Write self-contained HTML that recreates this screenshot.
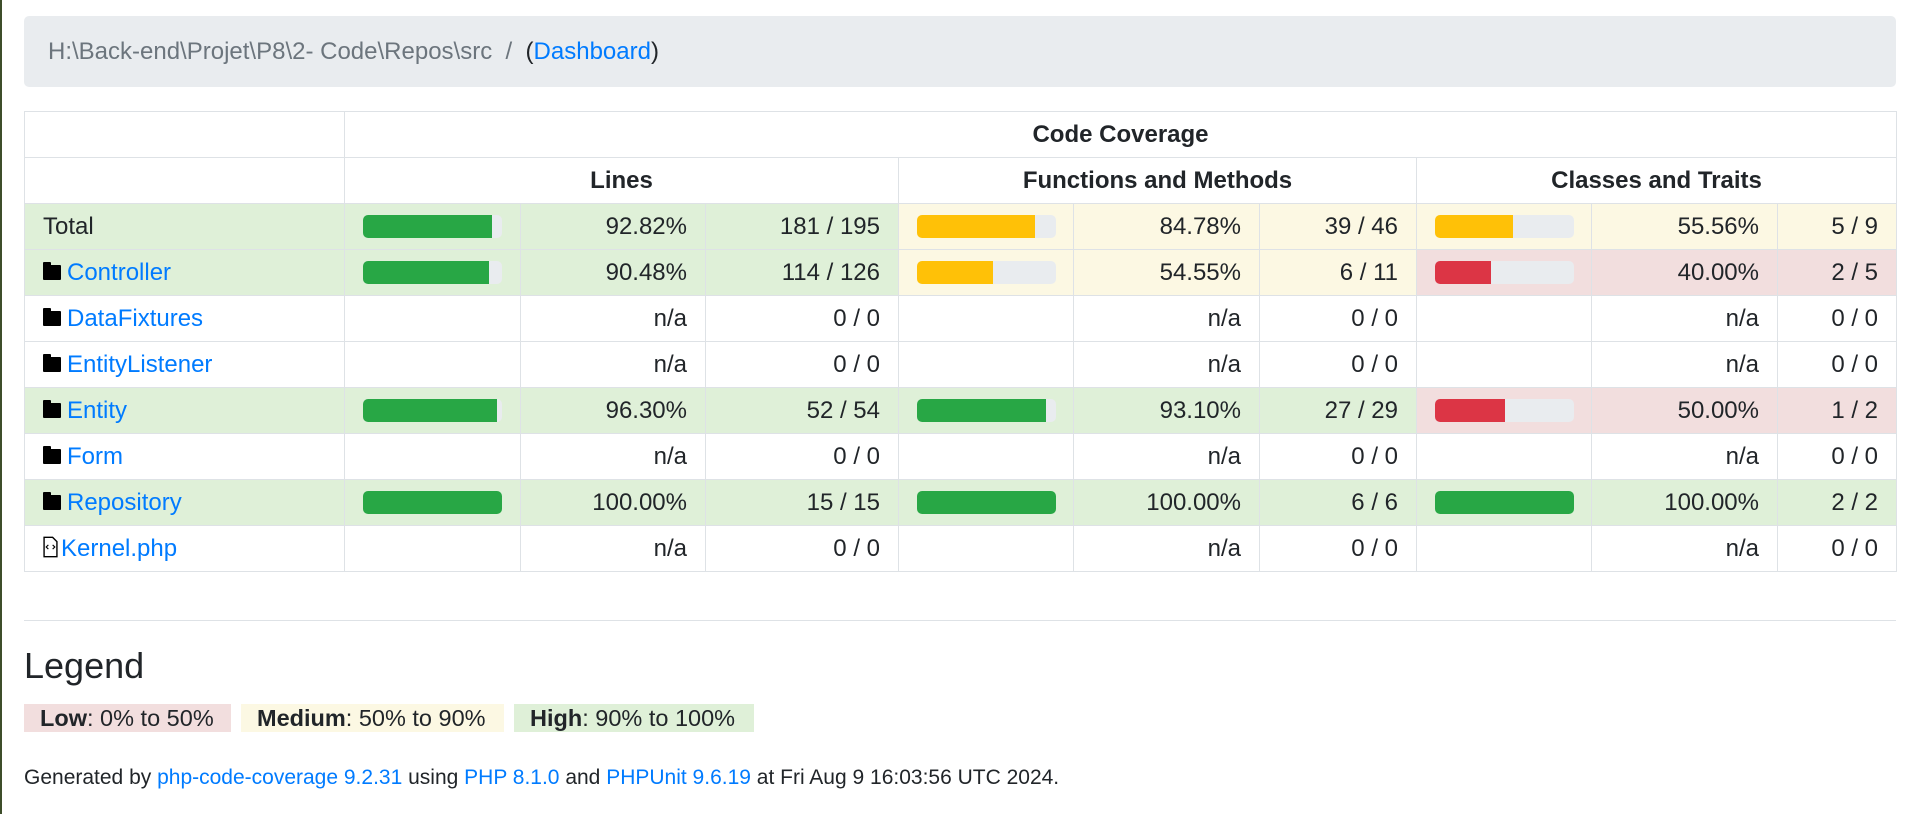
<!DOCTYPE html>
<html><head><meta charset="utf-8"><style>
*{box-sizing:border-box}
body{margin:0;width:1906px;height:814px;overflow:hidden;background:#fff;font-family:"Liberation Sans",Arial,sans-serif;font-size:24px;color:#212529;border-left:2px solid #3d4d2a}
a{color:#007bff;text-decoration:none}
.bc{position:absolute;left:24px;top:16px;width:1872px;height:71px;background:#e9ecef;border-radius:5px;padding:0 24px;line-height:71px;color:#6c757d;font-size:24px}
.bc .d{color:#212529}
table{position:absolute;left:24px;top:111px;border-collapse:collapse;table-layout:fixed;width:1872px}
td,th{border:1px solid #dee2e6;height:46px;padding:0 18px;text-align:right;white-space:nowrap}
th{text-align:center;font-weight:bold}
td.n{text-align:left;padding-left:18px}
.s td{background:#dff0d8}
td.w{background:#fcf8e3!important}
td.r{background:#f2dede!important}
td.b{padding:0 18px}
.p{height:23px;background:#e9ecef;border-radius:5px;overflow:hidden;width:139px}
.p i{display:block;height:100%}
.g{background:#28a745}.y{background:#ffc107}.x{background:#dc3545}
.f{display:inline-block;width:18px;height:15px;background:#000;position:relative;vertical-align:0px;margin-right:6px;border-radius:1px}
.f:before{content:"";position:absolute;left:0;top:-3px;width:8px;height:4px;background:#000;border-radius:1px 1px 0 0}
.hr{position:absolute;left:24px;top:620px;width:1872px;border-top:1px solid #dee2e6}
h2{position:absolute;left:24px;top:644px;margin:0;font-weight:400;font-size:36px;line-height:44px}
.lg{position:absolute;top:704px;height:28px;line-height:28px;padding:0 16px;font-size:23.5px}
.ft{position:absolute;left:24px;top:766px;font-size:21px}
</style></head><body>
<div class="bc">H:\Back-end\Projet\P8\2- Code\Repos\src &nbsp;/&nbsp; <span class="d">(<a>Dashboard</a>)</span></div>
<table>
<colgroup><col style="width:320px"><col style="width:176px"><col style="width:185px"><col style="width:193px"><col style="width:175px"><col style="width:186px"><col style="width:157px"><col style="width:175px"><col style="width:186px"><col style="width:119px"></colgroup>
<tr><th></th><th colspan="9">Code Coverage</th></tr>
<tr><th></th><th colspan="3">Lines</th><th colspan="3">Functions and Methods</th><th colspan="3">Classes and Traits</th></tr>
<tr class="s"><td class="n">Total</td><td class="b"><div class="p"><i class="g" style="width:93%"></i></div></td><td>92.82%</td><td>181 / 195</td><td class="b w"><div class="p"><i class="y" style="width:85%"></i></div></td><td class="w">84.78%</td><td class="w">39 / 46</td><td class="b w"><div class="p"><i class="y" style="width:56%"></i></div></td><td class="w">55.56%</td><td class="w">5 / 9</td></tr>
<tr class="s"><td class="n"><span class="f"></span><a>Controller</a></td><td class="b"><div class="p"><i class="g" style="width:90.5%"></i></div></td><td>90.48%</td><td>114 / 126</td><td class="b w"><div class="p"><i class="y" style="width:55%"></i></div></td><td class="w">54.55%</td><td class="w">6 / 11</td><td class="b r"><div class="p"><i class="x" style="width:40%"></i></div></td><td class="r">40.00%</td><td class="r">2 / 5</td></tr>
<tr><td class="n"><span class="f"></span><a>DataFixtures</a></td><td></td><td>n/a</td><td>0 / 0</td><td></td><td>n/a</td><td>0 / 0</td><td></td><td>n/a</td><td>0 / 0</td></tr>
<tr><td class="n"><span class="f"></span><a>EntityListener</a></td><td></td><td>n/a</td><td>0 / 0</td><td></td><td>n/a</td><td>0 / 0</td><td></td><td>n/a</td><td>0 / 0</td></tr>
<tr class="s"><td class="n"><span class="f"></span><a>Entity</a></td><td class="b"><div class="p"><i class="g" style="width:96.3%"></i></div></td><td>96.30%</td><td>52 / 54</td><td class="b"><div class="p"><i class="g" style="width:93%"></i></div></td><td>93.10%</td><td>27 / 29</td><td class="b r"><div class="p"><i class="x" style="width:50%"></i></div></td><td class="r">50.00%</td><td class="r">1 / 2</td></tr>
<tr><td class="n"><span class="f"></span><a>Form</a></td><td></td><td>n/a</td><td>0 / 0</td><td></td><td>n/a</td><td>0 / 0</td><td></td><td>n/a</td><td>0 / 0</td></tr>
<tr class="s"><td class="n"><span class="f"></span><a>Repository</a></td><td class="b"><div class="p"><i class="g" style="width:100%"></i></div></td><td>100.00%</td><td>15 / 15</td><td class="b"><div class="p"><i class="g" style="width:100%"></i></div></td><td>100.00%</td><td>6 / 6</td><td class="b"><div class="p"><i class="g" style="width:100%"></i></div></td><td>100.00%</td><td>2 / 2</td></tr>
<tr><td class="n"><svg width="15" height="22" viewBox="0 0 14 20" style="vertical-align:-2px;margin-right:3px"><path d="M1 1h8l4 4v14H1z" fill="#fff" stroke="#000" stroke-width="1.3"/><path d="M5 8l-2 2 2 2M9 8l2 2-2 2" fill="none" stroke="#000" stroke-width="1.1"/></svg><a>Kernel.php</a></td><td></td><td>n/a</td><td>0 / 0</td><td></td><td>n/a</td><td>0 / 0</td><td></td><td>n/a</td><td>0 / 0</td></tr>
</table>
<div class="hr"></div>
<h2>Legend</h2>
<div class="lg" style="left:24px;width:207px;background:#f2dede"><b>Low</b>: 0% to 50%</div>
<div class="lg" style="left:241px;width:263px;background:#fcf8e3"><b>Medium</b>: 50% to 90%</div>
<div class="lg" style="left:514px;width:240px;background:#dff0d8"><b>High</b>: 90% to 100%</div>
<div class="ft">Generated by <a>php-code-coverage 9.2.31</a> using <a>PHP 8.1.0</a> and <a>PHPUnit 9.6.19</a> at Fri Aug 9 16:03:56 UTC 2024.</div>
</body></html>
